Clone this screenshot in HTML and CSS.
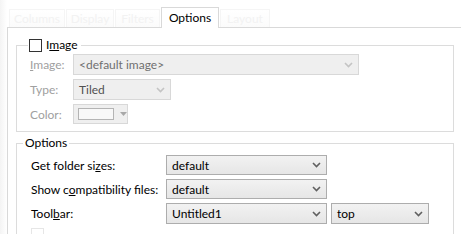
FILE: index.html
```html
<!DOCTYPE html>
<html>
<head>
<meta charset="utf-8">
<link rel="stylesheet" href="styles.css">
</head>
<body>
<div class="window">
  <div class="tabs">
    <div class="tab faded t-col">Columns</div>
    <div class="tab faded t-dis">Display</div>
    <div class="tab faded t-fil">Filters</div>
    <div class="tab active">Options</div>
    <div class="tab faded t-lay">Layout</div>
  </div>
  <div class="panel">
    <fieldset class="group g-image">
      <legend class="legend"><span class="check"></span><span>I<u>m</u>age</span></legend>
      <div class="row r1">
        <span class="label dis"><u>I</u>mage:</span>
        <div class="combo disabled w-img"><span class="val">&lt;default image&gt;</span><svg class="chev" width="9" height="6" viewBox="0 0 9 6"><path d="M1 1 L4.5 4.5 L8 1" fill="none" stroke="#c4c4c4" stroke-width="1.6"/></svg></div>
      </div>
      <div class="row r2">
        <span class="label dis">Type:</span>
        <div class="combo disabled w-type"><span class="val dark">Tiled</span><svg class="chev" width="9" height="6" viewBox="0 0 9 6"><path d="M1 1 L4.5 4.5 L8 1" fill="none" stroke="#c4c4c4" stroke-width="1.6"/></svg></div>
      </div>
      <div class="row r3">
        <span class="label dis">Color:</span>
        <div class="colorbox"><span class="swatch"></span><svg class="tri" width="7" height="4" viewBox="0 0 7 4"><path d="M0 0 H7 L3.5 4 Z" fill="#a8a8a8"/></svg></div>
      </div>
    </fieldset>
    <fieldset class="group g-opts">
      <legend class="legend2">Options</legend>
      <div class="orow">
        <span class="olabel">Get folder si<u>z</u>es:</span>
        <div class="combo en w-main"><span class="val">default</span><svg class="chev" width="9" height="6" viewBox="0 0 9 6"><path d="M1 1 L4.5 4.5 L8 1" fill="none" stroke="#606060" stroke-width="1.6"/></svg></div>
      </div>
      <div class="orow">
        <span class="olabel">Show c<u>o</u>mpatibility files:</span>
        <div class="combo en w-main"><span class="val">default</span><svg class="chev" width="9" height="6" viewBox="0 0 9 6"><path d="M1 1 L4.5 4.5 L8 1" fill="none" stroke="#606060" stroke-width="1.6"/></svg></div>
      </div>
      <div class="orow">
        <span class="olabel">Tool<u>b</u>ar:</span>
        <div class="combo en w-main tall"><span class="val">Untitled1</span><svg class="chev" width="9" height="6" viewBox="0 0 9 6"><path d="M1 1 L4.5 4.5 L8 1" fill="none" stroke="#606060" stroke-width="1.6"/></svg></div>
        <div class="combo en w-top"><span class="val">top</span><svg class="chev" width="9" height="6" viewBox="0 0 9 6"><path d="M1 1 L4.5 4.5 L8 1" fill="none" stroke="#606060" stroke-width="1.6"/></svg></div>
      </div>
      <div class="orow">
        <span class="check small"></span>
      </div>
    </fieldset>
  </div>
</div>
</body>
</html>
```
FILE: styles.css
```css
html, body {
  margin: 0;
  padding: 0;
  background: #ffffff;
  overflow: hidden;
}
body {
  width: 461px;
  height: 234px;
  font-family: Lato, "Liberation Sans", sans-serif;
  font-size: 12px;
  color: #000;
}
.window {
  width: 461px;
  height: 234px;
  overflow: hidden;
  background: linear-gradient(to right, #f4f4f4, #ffffff 7px);
}
.tabs {
  display: flex;
  align-items: flex-end;
  height: 27px;
  padding-left: 9px;
  white-space: nowrap;
}
.tab {
  height: 18px;
  line-height: 17px;
  border: 1px solid #f5f5f5;
  border-bottom: none;
  margin-right: 1px;
  box-sizing: border-box;
  text-align: center;
  overflow: hidden;
}
.t-col { width: 56px; }
.t-dis { width: 48px; }
.t-fil { width: 45px; }
.t-lay { width: 50px; }
.tab.faded {
  color: #f2f2f2;
  background: linear-gradient(#ffffff, #fbfbfb);
}
.tab.active {
  height: 21px;
  line-height: 19px;
  width: 58px;
  border-color: #d9d9d9;
  color: #000;
  background: #fff;
  margin-bottom: -1px;
  position: relative;
  z-index: 1;
}
.panel {
  margin-left: 7px;
  border-top: 1px solid #d9d9d9;
  border-left: 1px solid #d9d9d9;
  padding: 10px 0 0 8px;
  height: 220px;
  box-sizing: border-box;
  background: #fff;
}
.group {
  margin: 0;
  width: 438px;
  box-sizing: border-box;
  border: 1px solid #dcdcdc;
}
.g-image {
  padding: 2px 0 6px 13px;
  height: 94px;
}
.legend {
  display: flex;
  align-items: center;
  gap: 4px;
  padding: 0 3px 0 1px;
  margin-left: -2px;
  height: 14px;
  line-height: 14px;
}
.check {
  display: inline-block;
  width: 11px;
  height: 11px;
  border: 1px solid #333;
  background: #fff;
}
.check.small {
  border-color: #e6e6e6;
}
.row {
  display: flex;
  align-items: center;
  margin-bottom: 4px;
  white-space: nowrap;
}
.label {
  width: 43px;
}
.dis {
  color: #a0a0a0;
}
.combo {
  display: flex;
  align-items: center;
  justify-content: space-between;
  box-sizing: border-box;
  height: 21px;
  padding: 0 5px 0 5px;
}
.combo .val {
  line-height: 19px;
}
.disabled {
  background: #efefef;
  border: 1px solid #d8d8d8;
  color: #707070;
}
.val.dark {
  color: #505050;
}
.w-img { width: 286px; }
.w-type { width: 98px; }
.colorbox {
  display: flex;
  align-items: center;
  gap: 6px;
  width: 55px;
  height: 20px;
  box-sizing: border-box;
  background: #efefef;
  border: 1px solid #d8d8d8;
  padding-left: 4px;
}
.swatch {
  display: inline-block;
  width: 34px;
  height: 10px;
  border: 1px solid #b4b4b4;
  background: #f8f8f8;
}
.g-opts {
  margin-top: 4px;
  padding: 5px 0 0 14px;
  height: 120px;
}
.legend2 {
  padding: 0 2px;
  margin-left: -8px;
  line-height: 14px;
}
.orow {
  display: flex;
  align-items: center;
  gap: 4px;
  margin-bottom: 4px;
  white-space: nowrap;
}
.olabel {
  width: 131px;
}
.en {
  background: linear-gradient(#f2f2f2, #e6e6e6);
  border: 1px solid #adadad;
  color: #000;
}
.w-main { width: 161px; height: 20px; }
.w-main.tall { height: 21px; }
.w-top { width: 98px; height: 21px; }
```
